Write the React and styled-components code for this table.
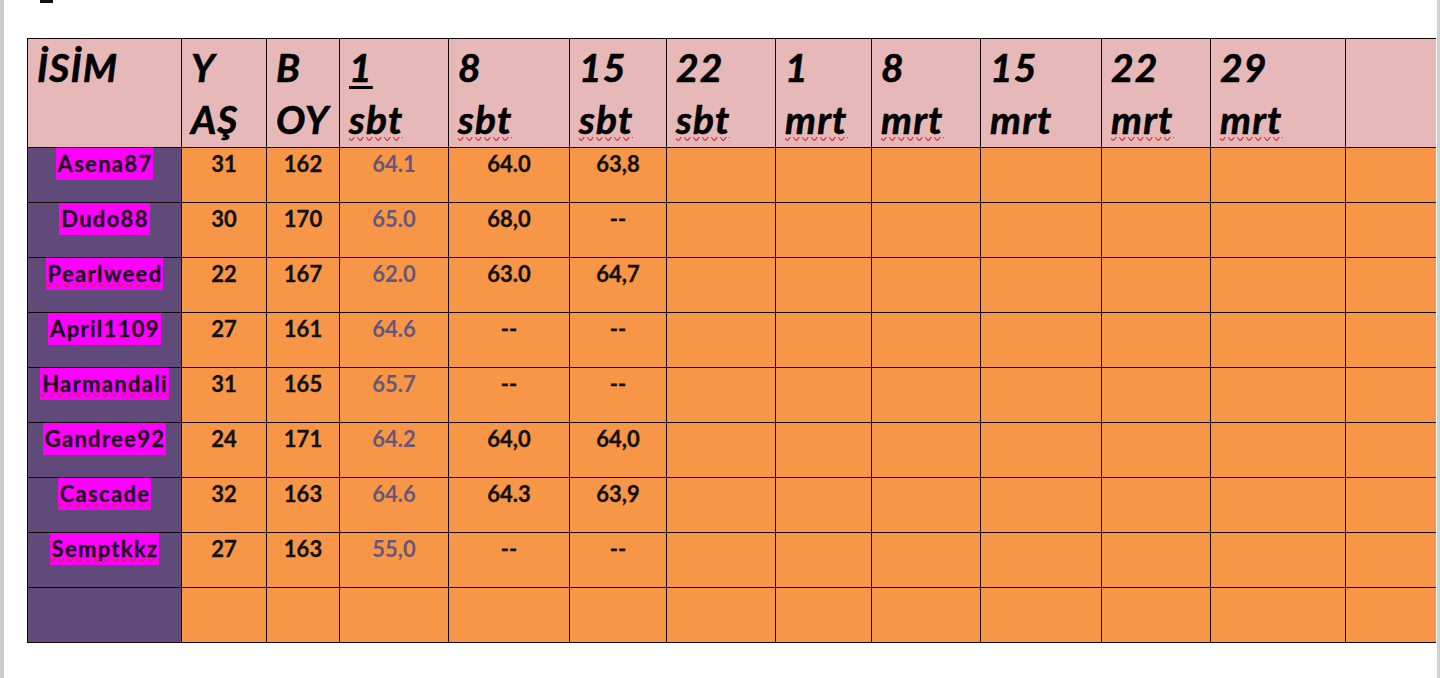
import React from 'react'
import styled, { createGlobalStyle } from 'styled-components'

const GlobalStyle = createGlobalStyle`
  html, body {
    margin: 0;
    padding: 0;
    background: #ffffff;
  }
  * {
    box-sizing: border-box;
  }
`

// spell-check squiggle, drawn as a tiny repeating svg
const wave = color =>
  `url("data:image/svg+xml,${encodeURIComponent(
    `<svg xmlns='http://www.w3.org/2000/svg' width='9' height='5' viewBox='0 0 9 5'><path d='M0 1 Q2.25 5.5 4.5 1 T9 1' fill='none' stroke='${color}' stroke-width='1.3'/></svg>`
  )}")`

const Page = styled.div`
  width: 1440px;
  height: 678px;
  overflow: hidden;
  display: flex;
  flex-direction: column;
  border-left: 4px solid #cdcdcd;
  border-right: 3px solid #d0d0d0;
  padding-left: 23px;
  font-family: Lato, "Open Sans", "Liberation Sans", sans-serif;
`

const Caret = styled.div`
  width: 13px;
  height: 3px;
  margin-left: 13px;
  background: #111;
`

const Clip = styled.div`
  width: 1409px;
  margin-top: 35px;
  overflow: hidden;
`

const Grid = styled.div`
  display: grid;
  grid-template-columns: 153px 84px 72px 108px 120px 96px 108px 95px 108px 120px 108px 134px 150px;
  grid-template-rows: 108px repeat(9, 54px);
  gap: 1px;
  padding: 1px 0 1px 1px;
  background: #140606;
  width: max-content;
`

const HeadCell = styled.div`
  background: #e6b9b8;
  padding: 2px 0 0 9px;
  display: flex;
  flex-direction: column;
  align-items: flex-start;
  font-weight: 700;
  font-style: italic;
  font-size: 39px;
  line-height: 52px;
  letter-spacing: 1.2px;
  -webkit-text-stroke: 0.6px #000;
  color: #000;
  white-space: nowrap;
`

const HeadLine = styled.span`
  height: 52px;
  text-decoration: ${p => p.$under ? 'underline' : 'none'};
  text-decoration-thickness: 3px;
  text-underline-offset: 4px;
  background: ${p => p.$wavy ? wave('#d9343c') : 'none'};
  background-repeat: repeat-x;
  background-position: 0 calc(100% - 3px);
  background-size: 9px 5px;
`

const Cell = styled.div`
  background: ${p => p.$name ? '#5f4a79' : '#f79646'};
  text-align: center;
  font-weight: 700;
  font-size: 22px;
  line-height: 32px;
  color: ${p => p.$muted ? '#67567b' : '#111'};
  -webkit-text-stroke: ${p => p.$muted ? '0' : '0.3px'};
  white-space: nowrap;
`

const Highlight = styled.span`
  display: inline-block;
  line-height: 32px;
  padding: 0 1px 0 2px;
  letter-spacing: 1.3px;
  color: #1a0a1a;
  background: ${p => p.$wavy ? `${wave('#c4284a')} repeat-x 0 calc(100% - 2px) / 9px 5px, #ff00ff` : '#ff00ff'};
`

// [top line, bottom line, top underlined, bottom squiggled]
const headers = [
  ['İSİM', '', false, false],
  ['Y', 'AŞ', false, false],
  ['B', 'OY', false, false],
  ['1', 'sbt', true, true],
  ['8', 'sbt', false, true],
  ['15', 'sbt', false, true],
  ['22', 'sbt', false, true],
  ['1', 'mrt', false, true],
  ['8', 'mrt', false, true],
  ['15', 'mrt', false, false],
  ['22', 'mrt', false, true],
  ['29', 'mrt', false, true],
  ['', '', false, false],
]

const rows = [
  ['Asena87', '31', '162', '64.1', '64.0', '63,8'],
  ['Dudo88', '30', '170', '65.0', '68,0', '--'],
  ['Pearlweed', '22', '167', '62.0', '63.0', '64,7', true],
  ['April1109', '27', '161', '64.6', '--', '--'],
  ['Harmandali', '31', '165', '65.7', '--', '--', true],
  ['Gandree92', '24', '171', '64.2', '64,0', '64,0'],
  ['Cascade', '32', '163', '64.6', '64.3', '63,9', true],
  ['Semptkkz', '27', '163', '55,0', '--', '--', true],
]

const emptyCols = 7

function App() {
  return (
    <Page>
      <GlobalStyle />
      <Caret />
      <Clip>
        <Grid>
          {headers.map(([top, bottom, underTop, wavy], i) => (
            <HeadCell key={'h' + i}>
              <HeadLine $under={underTop}>{top}</HeadLine>
              <HeadLine $wavy={wavy}>{bottom}</HeadLine>
            </HeadCell>
          ))}
          {rows.map(([name, age, height, w1, w2, w3, wavy], r) => (
            <React.Fragment key={name}>
              <Cell $name>
                <Highlight $wavy={wavy}>{name}</Highlight>
              </Cell>
              <Cell>{age}</Cell>
              <Cell>{height}</Cell>
              <Cell $muted>{w1}</Cell>
              <Cell>{w2}</Cell>
              <Cell>{w3}</Cell>
              {Array.from({ length: emptyCols }).map((_, c) => (
                <Cell key={r + '-' + c} />
              ))}
            </React.Fragment>
          ))}
          <Cell $name />
          {Array.from({ length: 12 }).map((_, c) => (
            <Cell key={'last' + c} />
          ))}
        </Grid>
      </Clip>
    </Page>
  )
}

export default App
